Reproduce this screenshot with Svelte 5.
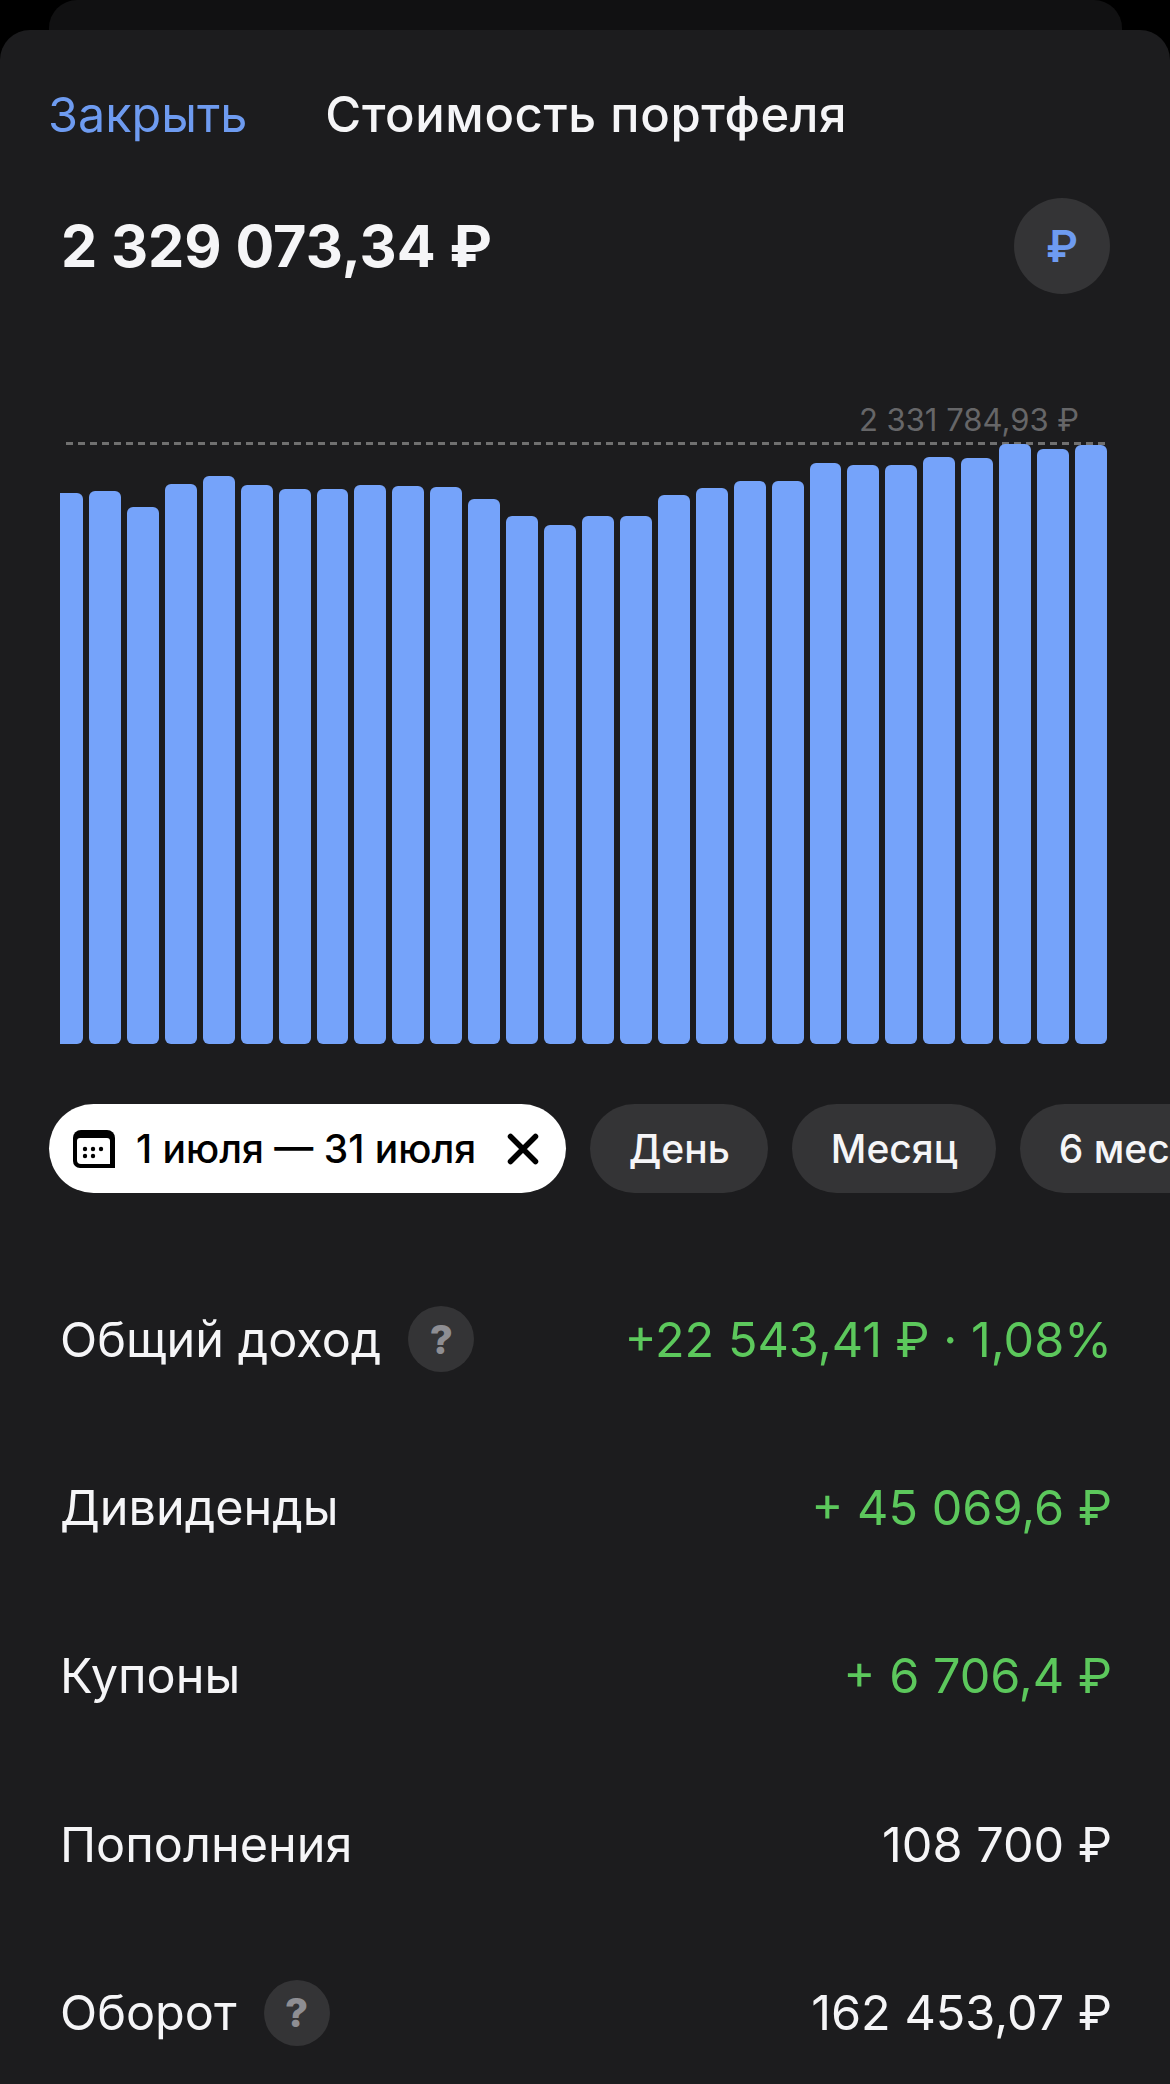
<script>
  // bar tops in page px, chart bottom is 1044
  const tops = [
    493, 491, 507, 484, 476, 485, 489, 489, 485, 486, 487, 499, 516, 525,
    516, 516, 495, 488, 481, 481, 463, 465, 465, 457, 458, 444, 449, 445
  ];
  const bottom = 1044;

  const chips = ['День', 'Месяц', '6 месяцев'];

  const rows = [
    { label: 'Общий доход', value: '+22 543,41 ₽ · 1,08%', green: true, help: true },
    { label: 'Дивиденды', value: '+ 45 069,6 ₽', green: true },
    { label: 'Купоны', value: '+ 6 706,4 ₽', green: true },
    { label: 'Пополнения', value: '108 700 ₽' },
    { label: 'Оборот', value: '162 453,07 ₽', help: true }
  ];
</script>

<div class="page">
  <div class="back-card"></div>
  <div class="sheet">
    <header class="top">
      <span class="close">Закрыть</span>
      <span class="title">Стоимость портфеля</span>
    </header>

    <div class="amount-row">
      <span class="amount">2 329 073,34 ₽</span>
      <span class="currency">₽</span>
    </div>

    <div class="chart">
      <div class="max-label">2 331 784,93 ₽</div>
      <div class="max-line"></div>
      <div class="bars">
        {#each tops as top}
          <div class="bar" style="height: {bottom - top}px"></div>
        {/each}
      </div>
    </div>

    <div class="chips">
      <div class="chip active">
        <svg class="cal" viewBox="0 0 42 38" width="42" height="38">
          <path d="M8 0h26a8 8 0 0 1 8 8v30H7a7 7 0 0 1-7-7V8a8 8 0 0 1 8-8z" fill="#000" />
          <path d="M7 8h27a3 3 0 0 1 3 3v23H8a4 4 0 0 1-4-4V11a3 3 0 0 1 3-3z" fill="#fff" />
          <circle cx="12" cy="19" r="2.2" fill="#000" />
          <circle cx="20" cy="19" r="2.2" fill="#000" />
          <circle cx="28" cy="19" r="2.2" fill="#000" />
          <circle cx="12" cy="26" r="2.2" fill="#000" />
          <circle cx="20" cy="26" r="2.2" fill="#000" />
        </svg>
        <span class="chip-dates">1 июля — 31 июля</span>
        <svg class="x" viewBox="0 0 32 32" width="32" height="32">
          <path d="M3.5 3.5l25 25M28.5 3.5l-25 25" stroke="#000" stroke-width="5.5" stroke-linecap="round" fill="none" />
        </svg>
      </div>
      {#each chips as chip}
        <div class="chip">{chip}</div>
      {/each}
    </div>

    <div class="rows">
      {#each rows as row}
        <div class="row">
          <div class="label">
            <span>{row.label}</span>
            {#if row.help}
              <span class="help">?</span>
            {/if}
          </div>
          <span class="value" class:green={row.green}>{row.value}</span>
        </div>
      {/each}
    </div>
  </div>
</div>

<style>
  :global(body) {
    background: #000;
    overflow: hidden;
  }

  .page {
    height: 2084px;
    overflow: hidden;
    background: #000;
    font-family: Inter, "Noto Sans", sans-serif;
    color: #f5f5f7;
  }

  .back-card {
    height: 30px;
    margin: 0 48px 0 49px;
    background: #111112;
    border-radius: 28px 28px 0 0;
  }

  .sheet {
    height: 2054px;
    background: #1c1c1e;
    border-radius: 30px 30px 0 0;
  }

  .top {
    display: flex;
    align-items: center;
    gap: 78px;
    height: 58px;
    padding: 55px 0 0 48px;
  }

  .close {
    font-size: 48.5px;
    color: #6e9bf0;
  }

  .title {
    font-size: 49px;
    font-weight: 500;
    letter-spacing: 0.6px;
  }

  .amount-row {
    display: flex;
    align-items: center;
    justify-content: space-between;
    padding: 55px 60px 0 61px;
  }

  .amount {
    font-size: 57.6px;
    font-weight: 700;
  }

  .currency {
    display: flex;
    align-items: center;
    justify-content: center;
    width: 96px;
    height: 96px;
    border-radius: 50%;
    background: #343436;
    color: #6e9bf0;
    font-size: 44px;
    font-weight: 600;
  }

  .chart {
    padding: 0 63px 0 60px;
  }

  .max-label {
    margin-top: 108px;
    padding-right: 28px;
    text-align: right;
    font-size: 31px;
    line-height: 36px;
    color: #666668;
  }

  .max-line {
    height: 3px;
    margin: 4px -2px 0 6px;
    background: repeating-linear-gradient(90deg, #707070 0 7px, transparent 7px 12px);
  }

  .bars {
    display: flex;
    align-items: flex-end;
    gap: 6px;
    height: 599px;
  }

  .bar {
    flex: 1;
    background: #75a3fa;
    border-radius: 6px;
  }

  .bar:first-child {
    flex: 0 0 23px;
    border-radius: 0 6px 6px 0;
  }

  .chips {
    display: flex;
    gap: 24px;
    margin-top: 60px;
    padding-left: 49px;
    overflow: hidden;
  }

  .chip {
    display: flex;
    flex-shrink: 0;
    align-items: center;
    height: 89px;
    padding: 0 38.5px;
    border-radius: 45px;
    background: #343436;
    font-size: 39px;
    font-weight: 500;
    white-space: nowrap;
  }

  .chip.active {
    padding: 0 27px 0 24px;
    background: #fff;
    color: #000;
  }

  .chip-dates {
    margin: 0 31px 0 21px;
  }

  .rows {
    margin-top: 62px;
  }

  .row {
    display: flex;
    align-items: center;
    justify-content: space-between;
    height: 168.4px;
    padding: 0 58px 0 60px;
    font-size: 48.6px;
  }

  .label {
    display: flex;
    align-items: center;
    gap: 27px;
  }

  .help {
    display: flex;
    align-items: center;
    justify-content: center;
    width: 66px;
    height: 66px;
    border-radius: 50%;
    background: #343436;
    color: #8e8e93;
    font-size: 40px;
    font-weight: 800;
  }

  .value.green {
    color: #5cc85c;
  }
</style>
